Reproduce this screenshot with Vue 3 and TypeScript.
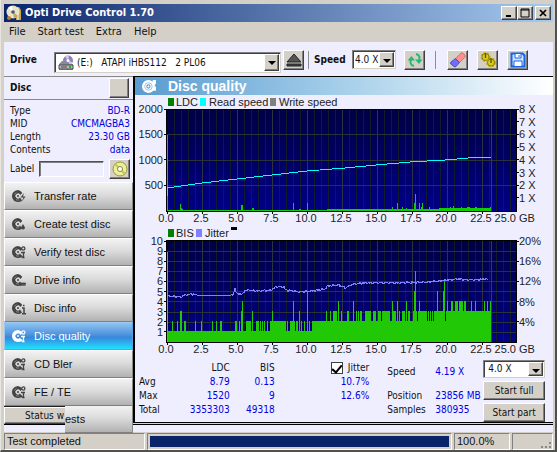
<script setup lang="ts">
import { ref } from 'vue'

interface Mark { x: number; text: string; color: string; tx: number }
interface Tick { y: number; text: string }
interface Rect { x: number; y: number; w: number; h: number }

// Shared plot geometry inside each chart
const left = 32
const top = 14
const width = 349
const base = 116

const menu = ['File', 'Start test', 'Extra', 'Help']
const nav = [
  { name: 'Transfer rate', icon: 'bolt' },
  { name: 'Create test disc', icon: 'drop' },
  { name: 'Verify test disc', icon: 'gear' },
  { name: 'Drive info', icon: 'drive' },
  { name: 'Disc info', icon: 'info' },
  { name: 'Disc quality', icon: 'gear' },
  { name: 'CD Bler', icon: 'gear' },
  { name: 'FE / TE', icon: 'gear' },
]
const active = ref('Disc quality')
const jitterOn = ref(true)
const discLabel = ref('')

const info = [
  ['Type', 'BD-R'],
  ['MID', 'CMCMAGBA3'],
  ['Length', '23.30 GB'],
  ['Contents', 'data'],
]
const stats = [
  ['Avg', '8.79', '0.13', '10.7%'],
  ['Max', '1520', '9', '12.6%'],
  ['Total', '3353303', '49318', ''],
]

const minor = Array.from({ length: 49 }, (_, i) => left + (i + 1) * 7)
const major = Array.from({ length: 9 }, (_, i) => left + (i + 1) * 35)
const xLabels = Array.from({ length: 10 }, (_, i) => ({ x: left + i * 35, text: (i * 2.5).toFixed(1) }))

const ldcMarks: Mark[] = [
  { x: 33, tx: 41, text: 'LDC', color: '#008000' },
  { x: 65, tx: 74, text: 'Read speed', color: '#00ffff' },
  { x: 135, tx: 144, text: 'Write speed', color: '#808080' },
]
const bisMarks: Mark[] = [
  { x: 33, tx: 41, text: 'BIS', color: '#008000' },
  { x: 61, tx: 70, text: 'Jitter', color: '#8080ff' },
]
const ldcTicks: Tick[] = ['2000', '1500', '1000', '500'].map((text, i) => ({ y: top + i * 25.4, text }))
const speedTicks: Tick[] = Array.from({ length: 8 }, (_, i) => ({ y: top + i * 12.7, text: `${8 - i} X` }))
const bisTicks: Tick[] = Array.from({ length: 10 }, (_, i) => ({ y: top + 1 + i * 10.1, text: String(10 - i) }))
const jitterTicks: Tick[] = Array.from({ length: 5 }, (_, i) => ({ y: top + 1 + i * 20.2, text: `${20 - i * 4}%` }))

// [start, width, height] above the plot's baseline
const ldcBars: Rect[] = [
  [0, 1, 76], [13, 1, 7], [14, 1, 3], [15, 1, 2], [74, 2, 6], [85, 2, 3], [126, 1, 8],
  [132, 2, 2], [140, 1, 8], [0, 160, 1], [160, 164, 2], [225, 1, 4], [230, 1, 8], [235, 1, 4],
  [239, 1, 3], [247, 1, 8], [248, 1, 17], [252, 1, 8], [254, 1, 4], [255, 1, 8], [262, 1, 4],
  [272, 52, 3], [283, 1, 4], [286, 1, 5], [294, 1, 4], [300, 3, 4], [308, 2, 4], [323, 1, 4],
].map(([x, w, h]) => ({ x: left + x, y: base - h, w, h }))

// [start, width, level] of BIS counts
const bisRuns = [
  [0, 180, 1], [179, 146, 2],
  [5, 1, 2], [10, 1, 2], [13, 2, 3], [17, 2, 2], [28, 1, 2], [34, 1, 2], [45, 1, 2], [49, 1, 2], [53, 2, 2],
  [68, 2, 2], [72, 1, 2], [74, 2, 3], [75, 1, 4], [79, 5, 2], [85, 1, 3], [89, 3, 2], [93, 1, 2], [95, 1, 2],
  [97, 1, 2], [100, 1, 2], [103, 16, 2], [105, 1, 3], [120, 1, 2], [123, 2, 2], [125, 3, 2], [126, 1, 4],
  [129, 2, 2], [132, 1, 3], [134, 1, 2], [137, 1, 2], [140, 1, 5], [142, 1, 2], [145, 35, 2],
  [159, 1, 3], [163, 1, 3], [166, 4, 3], [171, 1, 4], [174, 1, 3],
  [180, 2, 3], [186, 1, 4], [189, 1, 3], [191, 1, 3], [193, 2, 3], [198, 6, 3], [206, 3, 3], [211, 3, 3],
  [215, 8, 3], [225, 1, 4], [226, 3, 3], [230, 1, 4], [232, 1, 3], [235, 3, 3], [239, 1, 4], [241, 2, 3],
  [246, 4, 3], [247, 1, 5], [248, 1, 7], [251, 4, 3], [252, 1, 4], [255, 5, 3], [261, 1, 3], [263, 1, 3],
  [265, 1, 3], [267, 11, 3], [270, 1, 5], [276, 1, 5], [277, 1, 6], [279, 46, 3], [280, 1, 4], [284, 2, 4],
  [288, 3, 4], [292, 4, 4], [297, 2, 4], [304, 1, 4], [308, 1, 4], [317, 1, 4], [320, 1, 4], [323, 1, 4],
]
const bisBars: Rect[] = bisRuns.map(([x, w, n]) => ({ x: left + x, y: base - n * 10 - 1, w, h: n * 10 + 1 }))

const speedLine = [[0, 93], [35, 88], [70, 84], [105, 80], [140, 76], [178, 73], [209, 70], [243, 67], [278, 65], [313, 62], [324, 62]]
  .map(([x, y]) => `${left + x},${y}`).join(' ')

const jitterKeys = [
  [0, 70], [14, 71], [18, 69], [24, 68], [30, 69], [66, 69], [68, 62], [70, 68], [76, 68], [78, 64], [92, 65], [104, 64],
  [109, 61], [117, 61], [119, 64], [133, 66], [145, 65], [158, 63], [161, 60], [172, 59], [178, 62],
  [186, 58], [198, 57], [230, 57], [262, 56], [280, 54], [292, 53], [304, 54], [322, 53],
]
const jitterLine = (() => {
  const pts: string[] = []
  for (let k = 0; k < jitterKeys.length - 1; k++) {
    const [x0, y0] = jitterKeys[k]
    const [x1, y1] = jitterKeys[k + 1]
    for (let x = x0; x < x1; x++) {
      const flat = x > 30 && x < 64
      const wave = flat ? 0 : Math.sin(x * 2.3) * 0.8 + Math.sin(x * 5.1) * 0.5
      pts.push(`${left + x},${(y0 + ((y1 - y0) * (x - x0)) / (x1 - x0) + wave).toFixed(1)}`)
    }
  }
  return pts.join(' ')
})()

const charts = [
  { id: 'ldc', label: 'LDC and speed', marks: ldcMarks, lticks: ldcTicks, rticks: speedTicks, rows: [39, 65, 90], bars: ldcBars, line: speedLine, stroke: '#00ffff' },
  { id: 'bis', label: 'BIS and jitter', marks: bisMarks, lticks: bisTicks, rticks: jitterTicks, rows: [25, 35, 45, 55, 65, 75, 86, 96, 106], bars: bisBars, line: jitterLine, stroke: '#8080ff' },
]
</script>

<template>
  <div class="window">
    <header class="titlebar">
      <svg class="app-icon" viewBox="0 0 16 16" aria-hidden="true">
        <path d="M10 2h3l2 3v10h-5z" fill="#c9a24a" /><path d="M12 3v12" stroke="#fff" />
        <circle cx="7" cy="7" r="6.5" fill="#e8e4c8" /><path d="M7 7 2 3a6 6 0 0 1 4-2z" fill="#fff" />
        <path d="M7 7l5 4a6 6 0 0 1-4 2z" fill="#bda85c" /><circle cx="7" cy="7" r="1.8" fill="#4a5578" />
        <circle cx="3" cy="13" r="2" fill="#b97a3a" />
      </svg>
      <h1>Opti Drive Control 1.70</h1>
      <div class="winbtns">
        <button type="button" aria-label="Minimize"><svg viewBox="0 0 10 10"><path d="M2 8h5" stroke="#000" stroke-width="2" /></svg></button>
        <button type="button" aria-label="Maximize"><svg viewBox="0 0 10 10"><path d="M1 1h8v8H1zM1 2h8" fill="none" stroke="#000" /></svg></button>
        <button type="button" aria-label="Close" class="close"><svg viewBox="0 0 10 10"><path d="M2 2l6 6M8 2l-6 6" stroke="#000" stroke-width="1.7" /></svg></button>
      </div>
    </header>

    <nav class="menubar"><button v-for="m in menu" :key="m" type="button">{{ m }}</button></nav>

    <div class="toolbar">
      <label class="drive-label" for="drive">Drive</label>
      <div class="combo drive">
        <svg class="drive-icon" viewBox="0 0 16 16" aria-hidden="true">
          <circle cx="10" cy="5.5" r="5" fill="#8d84b8" /><path d="M10 5.5 7 1.5a5 5 0 0 1 4-.9zM10 5.5l4.500 2A5 5 0 0 1 12 10z" fill="#cfcbe8" />
          <circle cx="10" cy="5.5" r="1.5" fill="#fff" /><path d="M1 9l3-3h3l2 3h6v6H1z" fill="#8b8b93" />
          <path d="M1 10h14v4H1z" fill="#b9b9c0" stroke="#4b4b55" /><path d="M3 12h6" stroke="#444" /><path d="M11 12h2" stroke="#0c0" stroke-width="2" />
        </svg>
        <select id="drive"><option>(E:)&nbsp;&nbsp; ATAPI iHBS112&nbsp;&nbsp; 2 PL06</option></select>
        <span class="arrow"></span>
      </div>
      <button type="button" class="tool eject" aria-label="Eject">
        <svg viewBox="0 0 16 16"><path d="M8 2l7 8H1z" fill="#555" stroke="#222" /><path d="M1 12h14v2H1z" fill="#444" stroke="#222" /></svg>
      </button>
      <i class="sep"></i>
      <label class="speed-label" for="speed">Speed</label>
      <div class="combo speed">
        <select id="speed"><option>4.0 X</option></select>
        <span class="arrow"></span>
      </div>
      <button type="button" class="tool refresh" aria-label="Refresh">
        <svg viewBox="0 0 16 16"><path d="M7 14C3 13 3 10 4 7M9 2c4 1 4 4 3 6" fill="none" stroke="#2bb673" stroke-width="2" /><path d="M.5 8.500 4.500 4l3.500 4.500zM8 7.500h7.500L12 12z" fill="#2bb673" /></svg>
      </button>
      <i class="sep wide"></i>
      <button type="button" class="tool" aria-label="Erase disc">
        <svg viewBox="0 0 16 16"><path d="M5.500 6.500 11 1.200q1-.8 2 0l2 2q1 1 0 2l-5.500 5.300z" fill="#ff9090" stroke="#d06060" stroke-width=".8" /><path d="M5.500 6.500l4 4L6 14.500q-1 .8-2 0L1 12q-1-1 0-2z" fill="#6e6eff" stroke="#3838b8" stroke-width=".8" /></svg>
      </button>
      <button type="button" class="tool" aria-label="Options">
        <svg viewBox="0 0 16 16">
          <g fill="#dccb18" stroke="#6d6100">
            <circle cx="5.500" cy="5" r="4" stroke="#c0b010" stroke-width="2" stroke-dasharray="2 1.300" /><circle cx="5.500" cy="5" r="3.500" stroke-width=".7" />
            <circle cx="11" cy="10.500" r="4" stroke="#c0b010" stroke-width="2" stroke-dasharray="2 1.300" /><circle cx="11" cy="10.500" r="3.500" stroke-width=".7" />
          </g>
          <path d="M5.500 1v5M11 6v5" stroke="#5d5300" stroke-width="1.300" />
        </svg>
      </button>
      <button type="button" class="tool" aria-label="Save">
        <svg viewBox="0 0 16 16"><path d="M1.500 1.500h11l2 2v11h-13z" fill="#cfe2ff" stroke="#1763e0" stroke-width="2" /><path d="M5 2v4h6V2M4 14V9h8v5" fill="#fff" stroke="#1763e0" /><path d="M9 3v2" stroke="#1763e0" /></svg>
      </button>
    </div>

    <div class="body">
      <aside class="sidebar">
        <div class="disc-head"><h2>Disc</h2><button type="button" class="blank" aria-label="Disc details"></button></div>
        <dl class="info">
          <div v-for="[k, v] in info" :key="k"><dt>{{ k }}</dt><dd>{{ v }}</dd></div>
        </dl>
        <div class="label-row">
          <label for="disc-label">Label</label>
          <input id="disc-label" v-model="discLabel" type="text" />
          <button type="button" class="tool disc-btn" aria-label="Write label">
            <svg viewBox="0 0 16 16"><circle cx="8" cy="8" r="7" fill="#eeee98" stroke="#96963c" /><path d="M8 8 3 3M8 8l5 5" stroke="#c6c65c" stroke-width="2" /><circle cx="8" cy="8" r="2.500" fill="#fff" stroke="#88883a" /></svg>
          </button>
        </div>
        <button v-for="n in nav" :key="n.name" type="button" class="nav" :class="{ active: active === n.name }" @click="active = n.name">
          <svg viewBox="0 0 14 14" aria-hidden="true">
            <path fill-rule="evenodd" fill="currentColor" d="M6 1a6 6 0 1 0 4 10.500L8 8.500A2.500 2.500 0 1 1 8.300 6l2-2A6 6 0 0 0 6 1zM5 7a1 1 0 1 0 2 0 1 1 0 0 0-2 0z" />
            <path d="M2.500 5.500a4 4 0 0 1 2-2M4 10.500a4 4 0 0 0 3 .5" fill="none" stroke="#fff" stroke-opacity=".5" stroke-width=".7" />
            <path v-if="n.icon === 'bolt'" d="M12 4 8.500 8.500h3L9.500 13l4-5.500H11z" fill="currentColor" />
            <path v-else-if="n.icon === 'drop'" d="M11 7l2 3.500a2 2 0 1 1-4 0z" fill="currentColor" />
            <path v-else-if="n.icon === 'drive'" d="M8 10h5.500v1.500H8zM8 12.500h5.500" fill="currentColor" stroke="currentColor" stroke-width=".7" />
            <path v-else-if="n.icon === 'info'" d="M10 7h2v5.500M10 12.700h4M11 4.500h1.500" fill="none" stroke="currentColor" stroke-width="1.500" />
            <g v-else fill="none" stroke="currentColor" stroke-width="1.300"><circle cx="11.300" cy="3.500" r="1.600" /><path d="M9 7.500h4M11.500 7v5M9 10.500l1.500 2h2" /></g>
          </svg>
          <span>{{ n.name }}</span>
        </button>
        <div class="last-row">
          <div class="status-wrap"><button type="button" class="status-btn">Status w</button></div>
          <button type="button" class="nav tail">ests</button>
        </div>
      </aside>

      <main class="panel">
        <div class="panel-head">
          <svg viewBox="0 0 14 14" aria-hidden="true"><path fill-rule="evenodd" fill="#fff" d="M6 1a6 6 0 1 0 4.500 10L13 11V7h-1V5h1V1h-3v1.500A6 6 0 0 0 6 1zM4 7a2 2 0 1 0 4 0 2 2 0 0 0-4 0z" /><circle cx="6" cy="7" r="3.500" fill="none" stroke="#6fa8d8" stroke-width=".6" /><circle cx="6" cy="7" r="1" fill="#fff" /></svg>
          <h2>Disc quality</h2>
        </div>

        <svg v-for="c in charts" :key="c.id" class="chart" viewBox="0 0 418 131" role="img" :aria-label="c.label">
          <defs>
            <linearGradient :id="c.id + '-bg'" x1="0" y1="0" x2="0" y2="1"><stop offset="0" stop-color="#000044" /><stop offset="1" stop-color="#000088" /></linearGradient>
          </defs>
          <g v-for="m in c.marks" :key="m.text">
            <rect :x="m.x" y="3" width="6" height="8" :fill="m.color" />
            <text :x="m.tx" y="11">{{ m.text }}</text>
          </g>
          <rect v-if="c.id === 'bis'" x="96" y="1" width="6" height="3" fill="#000" />
          <g shape-rendering="crispEdges">
            <rect :x="left" :y="top" :width="width" :height="base - top" :fill="`url(#${c.id}-bg)`" />
            <path v-for="x in minor" :key="x" :d="`M${x + 0.5} ${top}V${base}`" stroke="#121c28" />
            <path v-for="x in major" :key="'m' + x" :d="`M${x + 0.5} ${top}V${base}`" stroke="#2c3440" />
            <path v-for="y in c.rows" :key="'r' + y" :d="`M${left} ${y + 0.5}H${left + width}`" stroke="#2a3238" />
            <rect v-for="(b, i) in c.bars" :key="i" :x="b.x" :y="b.y" :width="b.w" :height="b.h" :fill="c.id === 'ldc' ? '#10cc00' : '#20c806'" />
            <path v-if="c.id === 'ldc'" :d="`M${left + 0.5} 93V101`" stroke="#00ffff" />
            <path v-else :d="`M${left + 0.5} 26V${base}`" stroke="#78b010" />
            <polyline :points="c.line" fill="none" :stroke="c.stroke" />
            <path d="M356.500 14V116" stroke="#900090" />
            <path :d="`M${left - 0.5} ${top}H${left + width}V${base}H${left - 0.5}z`" fill="none" stroke="#000" />
            <path v-for="t in c.lticks" :key="'lt' + t.y" :d="`M29 ${t.y}H32`" stroke="#000" />
            <path v-for="t in c.rticks" :key="'rt' + t.y" :d="`M381 ${t.y}H384`" stroke="#000" />
            <path v-for="t in xLabels" :key="'xt' + t.x" :d="`M${t.x + 0.5} 116V119`" stroke="#000" />
          </g>
          <text v-for="t in c.lticks" :key="'l' + t.y" x="28" :y="t.y + 4" text-anchor="end">{{ t.text }}</text>
          <text v-for="t in c.rticks" :key="'q' + t.y" x="384" :y="t.y + 4">{{ t.text }}</text>
          <text v-for="t in xLabels" :key="'x' + t.x" :x="t.x - 1" y="127" text-anchor="middle">{{ t.text }}</text>
          <text x="381" y="127" text-anchor="end">25.0</text>
          <text x="384" y="127">GB</text>
        </svg>

        <section class="results">
          <table>
            <thead>
              <tr>
                <td></td><th scope="col">LDC</th><th scope="col">BIS</th>
                <th scope="col"><label class="check"><input v-model="jitterOn" type="checkbox" />Jitter</label></th>
              </tr>
            </thead>
            <tbody>
              <tr v-for="r in stats" :key="r[0]"><th scope="row">{{ r[0] }}</th><td>{{ r[1] }}</td><td>{{ r[2] }}</td><td>{{ r[3] }}</td></tr>
            </tbody>
          </table>
          <dl class="progress-info">
            <dt>Speed</dt><dd>4.19 X</dd>
            <dt class="gap">Position</dt><dd class="gap">23856 MB</dd>
            <dt>Samples</dt><dd>380935</dd>
          </dl>
          <div class="actions">
            <div class="combo">
              <select aria-label="Test speed"><option>4.0 X</option></select>
              <span class="arrow"></span>
            </div>
            <button type="button">Start full</button>
            <button type="button">Start part</button>
          </div>
        </section>
      </main>
    </div>

    <footer class="statusbar">
      <div class="cell message">Test completed</div>
      <div class="cell bar" role="progressbar" aria-valuenow="100" aria-label="Test progress"><div class="fill"></div></div>
      <div class="cell percent">100.0%</div>
      <div class="cell grip"><svg viewBox="0 0 12 12" aria-hidden="true"><path d="M1 10h2M5 10h2M9 10h2M9 6h2" stroke="#8a8880" stroke-width="2" /></svg></div>
    </footer>
  </div>
</template>

<style>
body { background: #d4d0c8; }
</style>

<style scoped>
* { box-sizing: border-box; }
h1, h2, dl, dd { margin: 0; }
button, select, input { font: inherit; color: inherit; padding: 0; margin: 0; border-radius: 0; }
.window {
  font: 11px/14px "DejaVu Sans Condensed", "DejaVu Sans", sans-serif;
  color: #111;
  background: #d4d0c8;
  padding: 4px 2px 0 3px;
  border: solid;
  border-width: 0 2px 2px 1px;
  border-color: #d4d0c8 #505050 #505050 #e8e6e0;
}
.titlebar { display: flex; align-items: center; height: 18px; padding: 0 2px; background: linear-gradient(90deg, #0a246a, #a6caf0); }
.app-icon { width: 16px; height: 16px; margin-right: 3px; }
.titlebar h1 { flex: 1; font-size: 11px; font-weight: bold; color: #fff; }
.winbtns { display: flex; }
.winbtns button, .tool, .blank, .arrow, .actions button, .status-btn {
  background: #d4d0c8;
  border: 1px solid;
  border-color: #fff #404040 #404040 #fff;
  box-shadow: inset -1px -1px #808080;
}
.winbtns button { width: 16px; height: 14px; display: flex; align-items: center; justify-content: center; }
.winbtns svg { width: 10px; height: 10px; }
.winbtns .close { margin-left: 2px; }
.menubar { display: flex; gap: 12px; height: 20px; padding-left: 5px; align-items: center; }
.menubar button { border: 0; background: none; }
.toolbar { display: flex; align-items: flex-start; height: 34px; padding: 8px 0 0 6px; background: #eef; font-size: 10px; }
.toolbar label { font-weight: bold; padding-top: 3px; }
.drive-label { width: 44px; }
.speed-label { width: 38px; }
.combo { position: relative; display: flex; height: 19px; background: #fff; border: 1px solid; border-color: #808080 #d4d0c8 #d4d0c8 #808080; box-shadow: inset 1px 1px #404040; }
.combo select { appearance: none; width: 100%; height: 100%; border: 0; background: none; padding-left: 4px; }
.combo .arrow { position: absolute; right: 1px; top: 1px; bottom: 1px; width: 15px; pointer-events: none; }
.arrow::after { content: ""; position: absolute; left: 3px; top: 6px; border: 4px solid transparent; border-top-color: #000; border-bottom: 0; }
.drive { flex: 1; height: 21px; margin-top: 2px; }
.drive select { padding-left: 22px; }
.drive-icon { position: absolute; left: 3px; top: 2px; width: 16px; height: 16px; }
.speed { width: 44px; margin-right: 8px; }
.speed select { padding-left: 2px; }
.tool { display: flex; flex: none; align-items: center; justify-content: center; width: 21px; height: 20px; }
.tool svg { width: 16px; height: 16px; }
.toolbar .tool { margin-right: 9px; }
.toolbar .tool:last-child { margin-right: 25px; }
.toolbar .eject { margin: 0 3px 0 2px; }
.sep { width: 1px; height: 18px; margin: 1px 5px 0 1px; background: #909090; }
.sep.wide { margin: 1px 11px 0 1px; }
.body { display: flex; }
.sidebar { flex: none; width: 129px; background: #eef; }
.disc-head { display: flex; align-items: center; justify-content: space-between; height: 24px; padding: 0 4px 0 6px; border: solid #888; border-width: 1px 0; }
.disc-head h2 { font-size: 10px; font-weight: bold; }
.blank { width: 20px; height: 20px; }
.info { padding: 4px 3px 0 6px; font-size: 10px; }
.info div { display: flex; justify-content: space-between; height: 13px; }
.info dd, .results dd, .results tbody td { color: #0000e0; }
.label-row { display: flex; align-items: center; gap: 5px; height: 26px; padding: 0 3px 0 6px; font-size: 10px; }
.label-row input { flex: 1; min-width: 0; height: 16px; background: #eef; border: 1px solid; border-color: #505050 #fff #fff #505050; box-shadow: inset 1px 1px #808080; }
.label-row label { width: 24px; }
.nav {
  display: flex; align-items: center; gap: 8px; width: 100%; height: 28px; padding-left: 7px; text-align: left;
  font: 11px/14px "Liberation Sans", Arial, sans-serif; color: #111;
  background: linear-gradient(#f2f2f2, #dcdcdc 45%, #b2b2b2);
  border: solid; border-width: 1px; border-color: #fff #888 #808080 #fff;
}
.nav svg { width: 14px; height: 14px; color: #444; }
.nav.active { color: #fff; background: linear-gradient(#8ec4f2, #4e93dd 45%, #3687dc 55%, #20e0ff); border-color: #9ccaf4 #58a0e0 #20c0e8 #9ccaf4; }
.nav.active svg { color: #fff; }
/* The last tab hangs over the top of the status bar */
.last-row { position: relative; display: flex; align-items: flex-start; height: 27px; margin-bottom: -9px; }
.status-wrap { width: 61px; flex: none; height: 18px; background: #d4d0c8; border-top: 1px solid #222; }
.status-btn { display: block; width: 100%; height: 17px; padding-right: 1px; text-align: right; white-space: nowrap; font-size: 10px; line-height: 14px; border-right: 0; box-shadow: inset 0 -1px #808080; }
.nav.tail { flex: 1; height: 27px; padding-left: 0; border-left: 0; border-top: 0; }
.panel { flex: 1; min-width: 0; display: flex; flex-direction: column; background: #eef; border: solid #000; border-width: 1px 0 1px 2px; margin-bottom: 1px; }
.panel-head { display: flex; align-items: center; gap: 11px; height: 18px; padding-left: 7px; background: linear-gradient(90deg, #5a9bd0, #a6cfea 50%, #fff); }
.panel-head svg { width: 15px; height: 15px; }
.panel-head h2 { font: bold 14px/18px "Liberation Sans", Arial, sans-serif; color: #fff; }
.chart { display: block; width: 100%; height: auto; }
.chart text { font: 11px "Liberation Sans", Arial, sans-serif; fill: #222; }
.results { display: flex; align-items: flex-start; height: 65px; font-size: 10px; }
.results table { border-collapse: collapse; margin: 4px 0 0 4px; }
.results td, .results th { padding: 0; height: 14px; line-height: 14px; font-weight: normal; text-align: right; }
.results tbody th { text-align: left; width: 34px; }
.results th:nth-child(2) { width: 57px; }
.results th:nth-child(3) { width: 45px; }
.results th:nth-child(4) { width: 95px; }
.check { display: flex; align-items: center; justify-content: flex-end; gap: 5px; }
.check input { appearance: none; width: 12px; height: 12px; background: #fff; border: 1px solid #404040; display: flex; justify-content: center; }
.check input:checked::after { content: ""; width: 4px; height: 8px; border: solid #000; border-width: 0 2px 2px 0; transform: rotate(40deg); }
.progress-info { display: grid; grid-template-columns: 48px 48px; grid-auto-rows: minmax(13px, auto); margin: 8px 0 0 18px; white-space: nowrap; }
.progress-info .gap { padding-top: 10px; }
.actions { display: flex; flex-direction: column; gap: 3px; width: 62px; margin: 3px 8px 0 auto; }
.actions button { height: 19px; font-size: 10px; }
.actions .combo { height: 18px; }
.statusbar { display: flex; align-items: stretch; gap: 2px; height: 26px; padding-top: 8px; border-top: 1px solid #000; background: linear-gradient(#eef 7px, #d4d0c8 7px); font: 11px/15px "Liberation Sans", Arial, sans-serif; }
.cell { border: 1px solid; border-color: #808080 #fff #fff #808080; padding-left: 2px; }
.message { width: 141px; }
.bar { flex: 1; padding: 2px; }
.fill { height: 100%; background: #0a246a; }
.percent { width: 56px; }
.grip { width: 41px; display: flex; align-items: flex-end; justify-content: flex-end; }
.grip svg { width: 12px; height: 12px; }
</style>
